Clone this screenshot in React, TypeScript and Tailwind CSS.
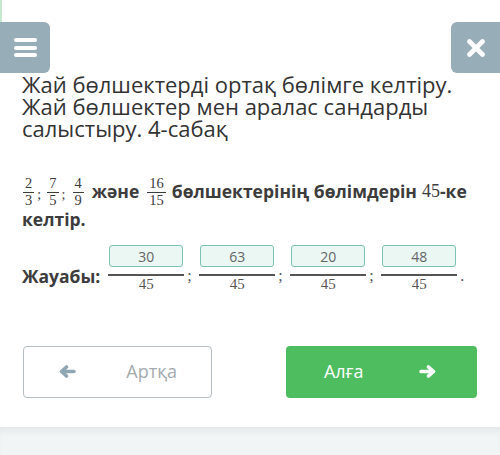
import type { ReactNode } from "react"

const serif = { fontFamily: '"Liberation Serif", "DejaVu Serif", serif' }

function Frac({ top, bottom }: { top: string; bottom: string }) {
  return (
    <span className="inline-flex flex-col items-stretch text-[14.5px] font-normal text-[#3c3c3c]" style={serif}>
      <span className="px-[2px] text-center leading-[15px] mb-[1px]">{top}</span>
      <span className="h-px bg-[#3c3c3c]" />
      <span className="px-[2px] text-center leading-[14px]">{bottom}</span>
    </span>
  )
}

function Sep({ w, children }: { w: string; children: ReactNode }) {
  return (
    <span className={`${w} pl-[3px] pt-[8px] text-[14px] font-normal leading-[14px] text-[#3c3c3c]`} style={serif}>
      {children}
    </span>
  )
}

function Answer({ value }: { value: string }) {
  return (
    <div className="flex w-[76px] flex-col items-center">
      <div className="flex h-[22px] w-[74px] items-center justify-center rounded-[3px] border-[1.5px] border-[#7cc3b1] bg-[#eaf7f3] text-[14px] text-[#666]">
        {value}
      </div>
      <div className="mt-[7px] h-[1.5px] w-full bg-[#555]" />
      <div className="text-[15px] leading-[16px] text-[#555]" style={serif}>
        45
      </div>
    </div>
  )
}

function Semi({ children = ";" }: { children?: string }) {
  return (
    <span className="w-[15px] pl-[3px] pt-[21px] text-[16px] leading-[20px] text-[#555]" style={serif}>
      {children}
    </span>
  )
}

function ArrowIcon({ dir, color }: { dir: "left" | "right"; color: string }) {
  return (
    <svg width="18" height="13" viewBox="0 0 18 13" className={dir === "left" ? "-scale-x-100" : ""}>
      <path d="M2 6.5H14.5M9.5 2L14.5 6.5L9.5 11" fill="none" stroke={color} strokeWidth="3.6" strokeLinecap="round" strokeLinejoin="round" />
    </svg>
  )
}

export default function App() {
  return (
    <div className="flex h-[455px] w-[500px] flex-col bg-white" style={{ fontFamily: '"Open Sans", "Noto Sans", sans-serif' }}>
      <div className="h-[22px] w-[2px] bg-[#c5e8cf]" />
      <div className="flex h-[51px] justify-between">
        <button className="flex w-[50px] items-center justify-center rounded-r-[6px] bg-[#97adb7]">
          <span className="flex flex-col gap-[3.5px]">
            <span className="block h-[4px] w-[23px] rounded-[2px] bg-white" />
            <span className="block h-[4px] w-[23px] rounded-[2px] bg-white" />
            <span className="block h-[4px] w-[23px] rounded-[2px] bg-white" />
          </span>
        </button>
        <button className="flex w-[49px] items-center justify-center rounded-l-[6px] bg-[#97adb7]">
          <svg width="20" height="18" viewBox="0 0 20 18">
            <path d="M3.5 2.5L16.5 15.5M16.5 2.5L3.5 15.5" stroke="white" strokeWidth="4.6" strokeLinecap="round" />
          </svg>
        </button>
      </div>

      <h1 className="px-[22px] text-[22px] leading-[22px] text-[#333]">
        Жай бөлшектерді ортақ бөлімге келтіру. Жай бөлшектер мен аралас сандарды салыстыру. 4-сабақ
      </h1>

      <div className="mt-[36px] px-[22px] text-[17.5px] font-bold text-[#3c3c3c]">
        <div className="flex h-[32px] items-center">
          <span className="ml-[1px]" />
          <Frac top="2" bottom="3" />
          <Sep w="w-[13px]">;</Sep>
          <Frac top="7" bottom="5" />
          <Sep w="w-[14px]">;</Sep>
          <Frac top="4" bottom="9" />
          <span className="ml-[8px] leading-[20px]">және</span>
          <span className="ml-[8px]" />
          <Frac top="16" bottom="15" />
          <span className="ml-[6px] leading-[20px]">бөлшектерінің бөлімдерін</span>
          <span className="ml-[5px] text-[18px] font-normal leading-[20px]" style={serif}>
            45
          </span>
          <span className="leading-[20px]">-ке</span>
        </div>
        <div className="mt-[2px] leading-[20px]">келтір.</div>
      </div>

      <div className="mt-[16px] flex items-start px-[22px]">
        <span className="mr-[8px] pt-[21px] text-[17.5px] font-bold leading-[20px] text-[#3c3c3c]">Жауабы:</span>
        <Answer value="30" />
        <Semi />
        <Answer value="63" />
        <Semi />
        <Answer value="20" />
        <Semi />
        <Answer value="48" />
        <Semi>.</Semi>
      </div>

      <div className="mt-[54px] flex px-[23px]">
        <button className="flex h-[52px] w-[190px] items-center justify-between rounded-[4px] border-[1.5px] border-[#b4bec4] bg-white px-[34px] text-[18px] text-[#a3abaf]">
          <ArrowIcon dir="left" color="#8fa5b1" />
          <span>Артқа</span>
        </button>
        <button className="ml-[74px] flex h-[52px] w-[192px] items-center justify-between rounded-[4px] bg-[#4dbd5f] pl-[38px] pr-[40px] text-[18px] text-white">
          <span>Алға</span>
          <ArrowIcon dir="right" color="#ffffff" />
        </button>
      </div>

      <div className="mt-auto h-[28px] bg-[#f2f5f6] shadow-[inset_0_8px_8px_-4px_rgba(0,0,0,0.06)]" />
    </div>
  )
}
